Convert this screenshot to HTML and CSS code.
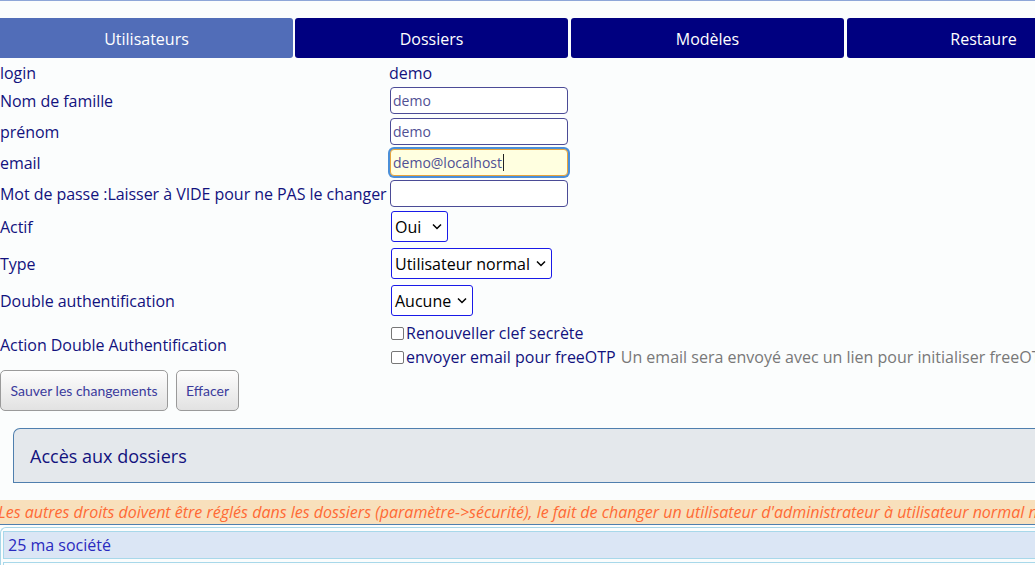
FILE: index.html
```html
<!DOCTYPE html>
<html lang="fr">
<head>
<meta charset="utf-8">
<title>Utilisateurs</title>
<link rel="stylesheet" href="styles.css">
</head>
<body>
<div class="page">
  <nav class="tabs">
    <div class="tab tab-active tab-first">Utilisateurs</div>
    <div class="tab">Dossiers</div>
    <div class="tab">Modèles</div>
    <div class="tab">Restaure</div>
  </nav>

  <form class="form">
    <div class="row row-login">
      <div class="label">login</div>
      <div class="value value-text">demo</div>
    </div>
    <div class="row row-input">
      <div class="label">Nom de famille</div>
      <div class="value"><input class="field" type="text" value="demo"></div>
    </div>
    <div class="row row-input">
      <div class="label">prénom</div>
      <div class="value"><input class="field" type="text" value="demo"></div>
    </div>
    <div class="row row-input">
      <div class="label">email</div>
      <div class="value"><div class="field field-focus">demo@localhost<span class="caret"></span></div></div>
    </div>
    <div class="row row-input">
      <div class="label">Mot de passe :Laisser à VIDE pour ne PAS le changer</div>
      <div class="value"><input class="field" type="password" value=""></div>
    </div>
    <div class="row row-select row-first-select">
      <div class="label">Actif</div>
      <div class="value"><div class="select sel-actif">Oui<span class="chev"><svg width="10" height="7" viewBox="0 0 10 7"><path d="M1 1.5 L5 5.5 L9 1.5" fill="none" stroke="#000" stroke-width="1.5"/></svg></span></div></div>
    </div>
    <div class="row row-select">
      <div class="label">Type</div>
      <div class="value"><div class="select sel-type">Utilisateur normal<span class="chev"><svg width="10" height="7" viewBox="0 0 10 7"><path d="M1 1.5 L5 5.5 L9 1.5" fill="none" stroke="#000" stroke-width="1.5"/></svg></span></div></div>
    </div>
    <div class="row row-select">
      <div class="label">Double authentification</div>
      <div class="value"><div class="select sel-double">Aucune<span class="chev"><svg width="10" height="7" viewBox="0 0 10 7"><path d="M1 1.5 L5 5.5 L9 1.5" fill="none" stroke="#000" stroke-width="1.5"/></svg></span></div></div>
    </div>
    <div class="row row-action">
      <div class="label">Action Double Authentification</div>
      <div class="value checks">
        <div class="check"><span class="box"></span>Renouveller clef secrète</div>
        <div class="check"><span class="box"></span>envoyer email pour freeOTP <span class="hint">Un email sera envoyé avec un lien pour initialiser freeOTP</span></div>
      </div>
    </div>
    <div class="buttons">
      <div class="btn btn-save">Sauver les changements</div>
      <div class="btn btn-clear">Effacer</div>
    </div>
  </form>

  <div class="panel">Accès aux dossiers</div>

  <div class="warning">Les autres droits doivent être réglés dans les dossiers (paramètre-&gt;sécurité), le fait de changer un utilisateur d'administrateur à utilisateur normal ne modifie pas ses droits</div>

  <div class="list">
    <div class="list-row">25 ma société</div>
    <div class="list-row"></div>
  </div>
</div>
</body>
</html>
```

FILE: styles.css
```css
html, body {
  margin: 0;
  padding: 0;
  overflow: hidden;
  background: #fbfdfd;
}
body {
  font-family: "Open Sans", "Noto Sans", sans-serif;
  font-size: 16px;
  color: #12127e;
  height: 565px;
}
.page {
  width: 1160px;
  border-top: 1px solid #8ea6d8;
}
.tabs {
  display: flex;
  margin-top: 17px;
  height: 40px;
}
.tab {
  box-sizing: border-box;
  width: 273px;
  height: 40px;
  padding-top: 2px;
  margin-left: 2px;
  background: #000080;
  color: #ffffff;
  border-radius: 3px;
  display: flex;
  align-items: center;
  justify-content: center;
  font-size: 16px;
}
.tab-first {
  width: 293px;
  margin-left: 0;
  border-radius: 0 3px 3px 0;
}
.tab:nth-child(3), .tab:nth-child(4) { margin-left: 3px; }
.tab-active {
  background: #516db8;
}
.form {
  margin-top: 4px;
}
.row {
  display: flex;
  align-items: center;
}
.label {
  width: 390px;
  flex: none;
  white-space: nowrap;
  letter-spacing: -0.05px;
}
.row-login {
  height: 22px;
  margin-bottom: 3px;
}
.value-text {
  margin-left: -1px;
}
.row-input {
  height: 27px;
  margin-bottom: 4px;
}
.field {
  box-sizing: border-box;
  width: 178px;
  height: 27px;
  border: 1px solid #4b4b96;
  border-radius: 4px;
  background: #ffffff;
  font-family: "Open Sans", "Noto Sans", sans-serif;
  font-size: 14px;
  color: #505094;
  padding: 0 2px;
  margin: 0;
  outline: none;
  display: flex;
  align-items: center;
}
.field-focus {
  background: #ffffe0;
  border: 1px solid #e7a43c;
  box-shadow: 0 0 0 2px #4b8fd8;
}
.caret {
  display: inline-block;
  width: 1px;
  height: 17px;
  background: #222;
  margin-left: 1px;
}
.row-first-select { margin-top: 2px; }
.row-select {
  height: 31px;
  margin-bottom: 6px;
}
.select {
  box-sizing: border-box;
  height: 31px;
  border: 1px solid #1a1ae8;
  border-radius: 3px;
  background: #ffffff;
  color: #000;
  font-size: 16px;
  display: flex;
  align-items: center;
  padding-left: 3px;
  margin-left: 1px;
}
.chev {
  display: flex;
  align-items: center;
  margin-left: auto;
  margin-right: 5px;
}
.sel-actif { width: 57px; }
.sel-type { width: 161px; }
.sel-double { width: 82px; }
.row-action {
  height: 48px;
  margin-top: -1px;
}
.checks {
  display: flex;
  flex-direction: column;
}
.check {
  height: 24px;
  display: flex;
  align-items: center;
  white-space: nowrap;
}
.box {
  box-sizing: border-box;
  width: 13px;
  height: 13px;
  border: 1px solid #777;
  border-radius: 2px;
  background: #fff;
  margin-left: 1px;
  margin-right: 2px;
}
.hint {
  color: #787878;
  margin-left: 5px;
}
.buttons {
  display: flex;
  gap: 8px;
  margin-top: 1px;
}
.btn {
  box-sizing: border-box;
  height: 41px;
  border: 1px solid #9a9a9a;
  border-radius: 5px;
  background: linear-gradient(#fdfdfd, #e2e2e2);
  font-family: Lato, "Open Sans", sans-serif;
  font-size: 14px;
  color: #3b3b9c;
  display: flex;
  align-items: center;
  justify-content: center;
}
.btn-save { width: 168px; }
.btn-clear { width: 63px; }
.panel {
  box-sizing: border-box;
  margin: 17px 0 0 13px;
  height: 55px;
  background: #e4e8ec;
  border: 1px solid #4f7fae;
  border-right: none;
  border-radius: 7px 0 0 0;
  padding-left: 16px;
  display: flex;
  align-items: center;
  font-size: 18px;
  color: #12127e;
}
.warning {
  margin-top: 17px;
  height: 24px;
  line-height: 24px;
  background: #f8e0bc;
  border-bottom: 1px solid #4f7fae;
  color: #ff6a35;
  font-style: italic;
  white-space: nowrap;
  margin-left: -2px;
}
.list {
  margin-top: 2px;
  border: 1px solid #a8d6e8;
  border-right: none;
  border-radius: 6px 0 0 0;
  padding: 3px 0 0 2px;
}
.list-row {
  box-sizing: border-box;
  height: 28px;
  background: #dbe6f5;
  border: 1px solid #a8d8ea;
  border-right: none;
  color: #2a2abf;
  padding-left: 4px;
  display: flex;
  align-items: center;
  margin-bottom: 3px;
}
.list-row + .list-row { background: #fbfdfd; }
```
